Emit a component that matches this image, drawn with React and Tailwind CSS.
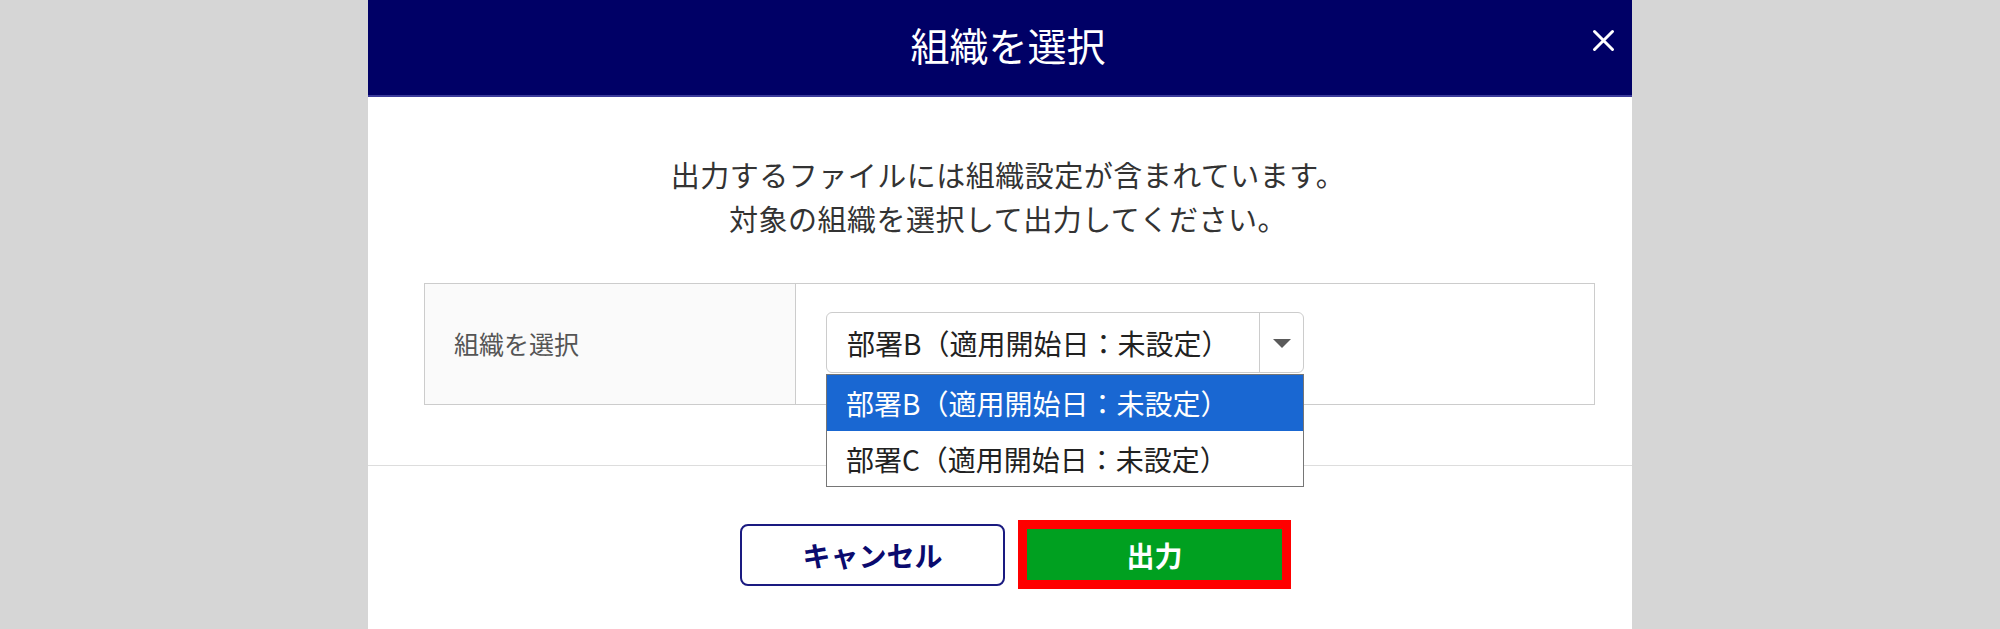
import React from "react";

export default function App() {
  return (
    <div
      className="w-[2000px] h-[629px] bg-[#d6d6d6] flex justify-center overflow-hidden"
      style={{ fontFamily: '"Noto Sans CJK JP", "Noto Sans", sans-serif' }}
    >
      <div className="w-[1264px] h-full bg-white flex flex-col">
        <header className="relative h-[97px] shrink-0 bg-[#000066] border-b-2 border-[#3b3b9a] flex items-center justify-center pl-[16px] pb-[6px]">
          <h1 className="text-[39px] leading-none text-white font-normal">組織を選択</h1>
          <button className="absolute right-[17px] top-[29px] w-[23px] h-[23px]" aria-label="close">
            <svg width="23" height="23" viewBox="0 0 23 23">
              <path d="M2.5 2.5 L20.5 20.5 M20.5 2.5 L2.5 20.5" stroke="white" strokeWidth="3" strokeLinecap="round" />
            </svg>
          </button>
        </header>

        <div className="pt-[55px] pl-[16px] text-center text-[29px] leading-[44px] tracking-[0.5px] text-[#333333]">
          <p>出力するファイルには組織設定が含まれています。</p>
          <p>対象の組織を選択して出力してください。</p>
        </div>

        <div className="mt-[43px] ml-[56px] w-[1171px] h-[122px] border border-[#cccccc] flex">
          <div className="w-[371px] border-r border-[#cccccc] bg-[#fafafa] flex items-center pl-[29px] text-[25px] text-[#555555]">
            組織を選択
          </div>
          <div className="flex-1 pl-[30px] pt-[28px]">
            <div className="relative w-[478px]">
              <div className="h-[61px] border border-[#cccccc] rounded-[6px] flex bg-white">
                <div className="flex-1 flex items-center pl-[20px] text-[28px] text-[#222222]">
                  部署B（適用開始日：未設定）
                </div>
                <div className="w-[44px] border-l border-[#cccccc] flex items-center justify-center">
                  <svg width="20" height="10" viewBox="0 0 20 10">
                    <path d="M1 1 L19 1 L10 10 Z" fill="#5a5a5a" />
                  </svg>
                </div>
              </div>
              <div className="absolute left-0 top-[62px] w-[478px] border border-[#767676] bg-white z-10 text-[28px]">
                <div className="h-[56px] flex items-center pl-[19px] bg-[#1967d2] text-white">
                  部署B（適用開始日：未設定）
                </div>
                <div className="h-[55px] flex items-center pl-[19px] text-[#222222]">
                  部署C（適用開始日：未設定）
                </div>
              </div>
            </div>
          </div>
        </div>

        <div className="mt-[60px] h-px w-full bg-[#dddddd]" />

        <div className="pt-[54px] flex items-center justify-center pl-[31px] gap-[13px]">
          <button className="w-[265px] h-[62px] border-2 border-[#1a1a80] rounded-[8px] bg-white text-[#0a0a6e] font-bold text-[28px] flex items-center justify-center">
            キャンセル
          </button>
          <button className="w-[273px] h-[69px] border-[9px] border-[#ff0000] bg-[#00a020] text-white font-bold text-[28px] flex items-center justify-center">
            出力
          </button>
        </div>
      </div>
    </div>
  );
}
